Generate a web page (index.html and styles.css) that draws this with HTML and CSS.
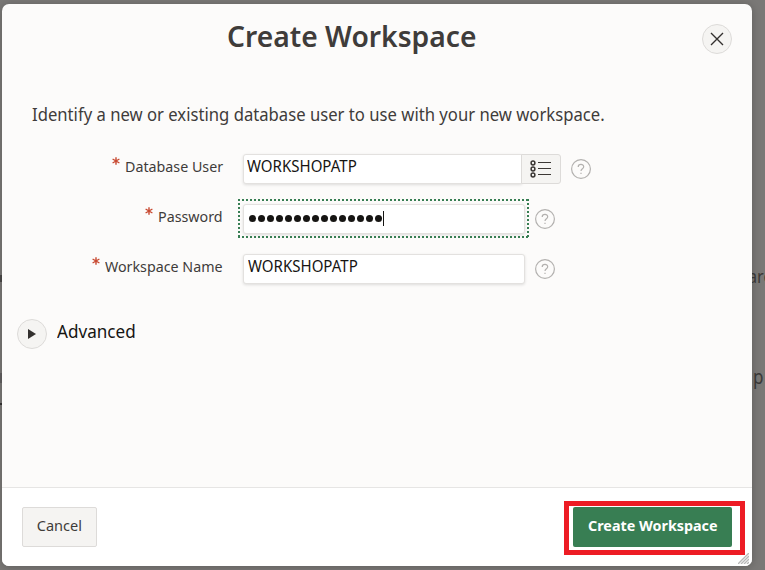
FILE: index.html
```
<!DOCTYPE html>
<html lang="en">
<head>
<meta charset="utf-8">
<title>Create Workspace</title>
<link rel="stylesheet" href="styles.css">
</head>
<body>
<div class="behind behind-are">are</div>
<div class="behind behind-p">p</div>
<div class="edge edge-one"></div>
<div class="edge edge-two"></div>
<div class="edge edge-three"></div>
<main class="dialog">
  <header class="header">
    <h1 class="title"><span class="t-title">Create Workspace</span></h1>
    <button class="round close" aria-label="Close"><svg width="14" height="14" viewBox="0 0 14 14"><path d="M1 1 13 13M13 1 1 13" fill="none" stroke="#33302e" stroke-width="1.35"/></svg></button>
  </header>
  <section class="content">
    <p class="intro"><span class="t-intro">Identify a new or existing database user to use with your new workspace.</span></p>
    <div class="row">
      <div class="label"><svg class="req" width="8" height="8" viewBox="0 0 8 8"><path d="M4 .2V7.8M.6 2 7.4 6M7.4 2 .6 6"/></svg><span class="t-user">Database User</span></div>
      <div class="field with-list"><span class="t-value">WORKSHOPATP</span></div>
      <button class="list" aria-label="List"><svg width="22" height="18" viewBox="0 0 22 18" fill="none" stroke="#3c3835"><g stroke-width="1.5"><circle cx="3" cy="3" r="1.9"/><circle cx="3" cy="9" r="1.9"/><circle cx="3" cy="15" r="1.9"/></g><path d="M8 2.5H21M8 8.5H21M8 14.5H21" stroke-width="1.2"/></svg></button>
      <svg class="help" width="20" height="20" viewBox="0 0 20 20"><circle cx="10" cy="10" r="9.4"/><path d="M7.2 8C7.2 4.5 12.7 4.5 12.7 7.8C12.7 9.8 10 9.7 10 12M10 13.7V14.9"/></svg>
    </div>
    <div class="row">
      <div class="label"><svg class="req" width="8" height="8" viewBox="0 0 8 8"><path d="M4 .2V7.8M.6 2 7.4 6M7.4 2 .6 6"/></svg><span class="t-pass">Password</span></div>
      <div class="field focused"><span class="dots"><i></i><i></i><i></i><i></i><i></i><i></i><i></i><i></i><i></i><i></i><i></i><i></i><i></i><i></i><i></i></span><span class="caret"></span></div>
      <svg class="help" width="20" height="20" viewBox="0 0 20 20"><circle cx="10" cy="10" r="9.4"/><path d="M7.2 8C7.2 4.5 12.7 4.5 12.7 7.8C12.7 9.8 10 9.7 10 12M10 13.7V14.9"/></svg>
    </div>
    <div class="row">
      <div class="label"><svg class="req" width="8" height="8" viewBox="0 0 8 8"><path d="M4 .2V7.8M.6 2 7.4 6M7.4 2 .6 6"/></svg><span class="t-name">Workspace Name</span></div>
      <div class="field plain"><span class="t-value">WORKSHOPATP</span></div>
      <svg class="help" width="20" height="20" viewBox="0 0 20 20"><circle cx="10" cy="10" r="9.4"/><path d="M7.2 8C7.2 4.5 12.7 4.5 12.7 7.8C12.7 9.8 10 9.7 10 12M10 13.7V14.9"/></svg>
    </div>
    <div class="advanced">
      <button class="round" aria-label="Expand"><svg width="8" height="10" viewBox="0 0 8 10"><path d="M0 0 8 5 0 10Z" fill="#33302e"/></svg></button>
      <span class="t-adv">Advanced</span>
    </div>
  </section>
  <footer class="footer">
    <button class="btn cancel"><span class="t-cancel">Cancel</span></button>
    <div class="highlight"><button class="btn primary"><span class="t-create">Create Workspace</span></button></div>
    <svg class="grip" width="11" height="11" viewBox="0 0 11 11"><path d="M0 11 11 0M3 11 11 3M6 11 11 6M9 11 11 9" stroke="#b8b8b8" stroke-width="1.4"/></svg>
  </footer>
</main>
</body>
</html>
```
FILE: styles.css
```
* { box-sizing: border-box; }
body {
  margin: 0; width: 765px; height: 570px; overflow: hidden; position: relative;
  background: #7a7876; padding: 4px 0 0 2px;
  font-family: "Noto Sans", "Open Sans", sans-serif; color: #3f3c3a;
}
button { font: inherit; color: inherit; padding: 0; }
svg { display: block; flex: none; }
span { white-space: nowrap; display: inline-block; flex: none; text-align: left; transform-origin: 0 50%; }
.behind { position: absolute; font-size: 18px; line-height: 24px; color: #3c3a39; transform: scaleX(.9); transform-origin: 0 50%; }
.behind-are { left: 748px; top: 264px; }
.behind-p { left: 753px; top: 365px; font-size: 19px; }
.edge { position: absolute; left: 0; width: 2px; background: #4b4948; }
.edge-one { top: 275px; height: 7px; }
.edge-two { top: 373px; height: 10px; background: #626060; }
.edge-three { top: 403px; height: 2px; background: #343231; }
.dialog {
  position: relative; width: 750px; height: 562px; background: #fcfbfa;
  border-radius: 7px; overflow: hidden; display: flex; flex-direction: column;
  box-shadow: 0 1px 8px rgba(0,0,0,.22);
}
.header { height: 66px; display: flex; align-items: flex-start; padding: 0 20px 0 225px; }
.title { margin: 12px 0 0; font-size: 29.5px; line-height: 40px; font-weight: 600; flex: 1; }
.t-title { transform: scaleX(.957); }
.round {
  width: 30px; height: 30px; border-radius: 50%; border: 1px solid #dddbd9;
  background: #f5f4f2; display: flex; align-items: center; justify-content: center; flex: none;
}
.close { margin-top: 20px; }
.content { flex: 1; }
.intro { margin: 31px 0 0 30px; font-size: 18px; line-height: 26px; height: 26px; }
.t-intro { transform: scaleX(.926); }
.row { display: flex; height: 30px; margin-top: 20px; align-items: center; }
.intro + .row { margin-top: 27px; }
.label { width: 221px; margin-right: 20px; height: 30px; display: flex; justify-content: flex-end; font-size: 15px; line-height: 24px; }
.t-user { width: 98px; transform: scaleX(.951); }
.t-pass { width: 65px; transform: scaleX(.951); }
.t-name { width: 118px; transform: scaleX(.951); }
.req { margin: 3px 5px 0 0; fill: none; stroke: #c84a32; stroke-width: 1.4; }
.field {
  width: 282px; height: 30px; border: 1px solid #e3e1df; border-radius: 3px; background: #fff;
  box-shadow: 0 1px 3px rgba(0,0,0,.12); font-size: 15.5px; line-height: 23px;
  color: #161513; padding-left: 4px; display: flex; margin-right: 10px;
}
.t-value { transform: scaleX(.97); }
.with-list { width: 279px; margin-right: 0; padding-left: 3px; border-radius: 3px 0 0 3px; }
.list {
  width: 40px; height: 30px; border: 1px solid #dddbd9; border-radius: 0 3px 3px 0;
  background: #f5f4f2; margin: 0 10px 0 -1px; display: flex; align-items: center; justify-content: center;
}
.focused { position: relative; }
.focused::after {
  content: ""; position: absolute; inset: -6px -5px -5px -6px; pointer-events: none;
  background:
    repeating-linear-gradient(90deg, #387e53 0 2px, transparent 2px 4px) 0 0 / 100% 2px no-repeat,
    repeating-linear-gradient(90deg, #387e53 0 2px, transparent 2px 4px) 0 100% / 100% 2px no-repeat,
    repeating-linear-gradient(#387e53 0 2px, transparent 2px 4px) 0 0 / 2px 100% no-repeat,
    repeating-linear-gradient(#387e53 0 2px, transparent 2px 4px) 100% 0 / 2px 100% no-repeat;
}
.dots { display: flex; gap: 2px; padding: 10px 0 0 1px; }
.dots i { width: 7px; height: 7px; border-radius: 50%; background: #161513; }
.caret { width: 1px; height: 15px; background: #161513; margin: 6px 0 0 1px; }
.help { fill: none; stroke: #b3b1af; stroke-width: 1.2; }
.advanced { display: flex; margin: 35px 0 0 15px; font-size: 18px; line-height: 24px; color: #161513; gap: 10px; }
.t-adv { transform: scaleX(.95); }
.footer {
  height: 79px; border-top: 1px solid #e6e5e4; background: #fff; display: flex;
  justify-content: space-between; padding: 13px 7px 0 20px;
}
.btn { display: flex; height: 40px; justify-content: center; font-size: 15px; line-height: 37px; border-radius: 2px; }
.btn span { transform-origin: 50% 50%; }
.t-cancel { transform: scaleX(.97); }
.t-create { transform: scaleX(.955); }
.cancel { width: 75px; margin-top: 6px; border: 1px solid #dddbd9; background: #f5f4f2; line-height: 35px; }
.highlight { width: 181px; height: 54px; border: 5px solid #ed1c24; padding: 1px 0 0 4px; }
.primary { width: 159px; border: 0; background: #387e53; color: #fff; font-weight: 700; }
.grip { position: absolute; right: 3px; bottom: 2px; }
```
